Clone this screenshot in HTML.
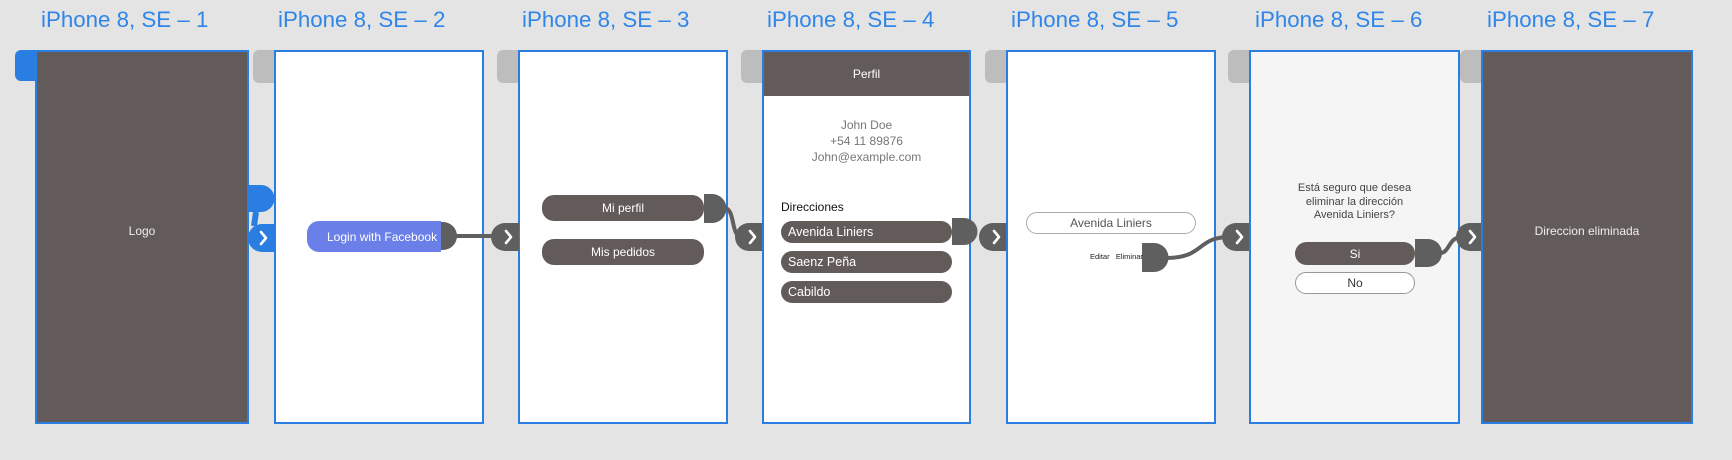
<!DOCTYPE html>
<html><head><meta charset="utf-8"><style>
*{margin:0;padding:0;box-sizing:border-box}
body{width:1732px;height:460px;background:#e4e4e4;position:relative;overflow:hidden;font-family:"Liberation Sans",Arial,sans-serif}
.t{position:absolute;top:7px;font-size:22.3px;color:#2f86e8;white-space:nowrap}
.f{position:absolute;top:50px;height:374px;border:2px solid #2a7de1;background:#fff}
.tab{position:absolute;top:50px;width:21px;height:33px;background:#bdbdbd;border-radius:6px 0 0 6px}
.a{position:absolute;white-space:nowrap}
.btn{position:absolute;background:#635b59;color:#fff;font-size:12px;border-radius:12px;display:flex;align-items:center;justify-content:center}
.lb{justify-content:flex-start;padding-left:7px;font-size:12.5px}
.c{text-align:center}
</style></head><body>
<div class="t" style="left:41px">iPhone 8, SE – 1</div>
<div class="t" style="left:278px">iPhone 8, SE – 2</div>
<div class="t" style="left:522px">iPhone 8, SE – 3</div>
<div class="t" style="left:767px">iPhone 8, SE – 4</div>
<div class="t" style="left:1011px">iPhone 8, SE – 5</div>
<div class="t" style="left:1255px">iPhone 8, SE – 6</div>
<div class="t" style="left:1487px">iPhone 8, SE – 7</div>

<div class="tab" style="left:15px;background:#2a7de1;height:31px"></div>
<div class="tab" style="left:253px"></div>
<div class="tab" style="left:497px"></div>
<div class="tab" style="left:741px"></div>
<div class="tab" style="left:985px"></div>
<div class="tab" style="left:1228px"></div>
<div class="tab" style="left:1460px"></div>

<div class="f" style="left:35px;width:214px;background:#635b59"></div>
<div class="f" style="left:274px;width:210px"></div>
<div class="f" style="left:518px;width:210px"></div>
<div class="f" style="left:762px;width:209px"></div>
<div class="f" style="left:1006px;width:210px"></div>
<div class="f" style="left:1249px;width:211px;background:#f5f5f5"></div>
<div class="f" style="left:1481px;width:212px;background:#635b59"></div>

<svg width="1732" height="460" style="position:absolute;left:0;top:0">
<g fill="none" stroke="#5f5f5f" stroke-width="4">
<path d="M455 236 H495"/>
<path d="M724 208 C736 208 730 237 742 237"/>
<path d="M1166 258 C1205 258 1196 237 1230 237"/>
<path d="M1440 253 C1450 253 1448 237 1462 237"/>
</g>
<path d="M256 212 L254 226" stroke="#2a7de1" stroke-width="6"/>
<path d="M249 185 H261 A13.5 13.5 0 0 1 261 212 H249Z" fill="#2a7de1"/>
<g fill="#5f5f5f">
<path d="M431 222 H443 A14 14 0 0 1 443 250 H431Z"/>
<path d="M704 194 H712 A14.5 14.5 0 0 1 712 223 H704Z"/>
<path d="M952 218 H964 A13.5 13.5 0 0 1 964 245 H952Z"/>
<path d="M1142 243 H1154 A14.5 14.5 0 0 1 1154 272 H1142Z"/>
<path d="M1415 239 H1428 A14 14 0 0 1 1428 267 H1415Z"/>
<path d="M519 223 H505 A14 14 0 0 0 505 251 H519Z"/>
<path d="M762 223 H749 A14 14 0 0 0 749 251 H762Z"/>
<path d="M1006 223 H993 A14 14 0 0 0 993 251 H1006Z"/>
<path d="M1249 223 H1236 A14 14 0 0 0 1236 251 H1249Z"/>
<path d="M1481 223 H1470 A14 14 0 0 0 1470 251 H1481Z"/>
</g>
<path d="M274 224 H262 A14 14 0 0 0 262 252 H274Z" fill="#2a7de1"/>
<g fill="none" stroke="#fff" stroke-width="2.6" stroke-linecap="round" stroke-linejoin="round">
<path d="M261 232 L266 238 L261 244"/>
<path d="M506 231 L511 237 L506 243"/>
<path d="M750 231 L755 237 L750 243"/>
<path d="M994 231 L999 237 L994 243"/>
<path d="M1237 231 L1242 237 L1237 243"/>
<path d="M1470 231 L1475 237 L1470 243"/>
</g>
</svg>

<div class="a" style="left:35px;width:214px;top:224px;text-align:center;color:#eee;font-size:12px">Logo</div>

<div class="btn" style="left:307px;top:221px;width:134px;height:31px;background:#6a7fe8;border-radius:12px 0 0 12px;justify-content:flex-start;padding-left:20px">Login with Facebook</div>

<div class="btn" style="left:542px;top:195px;width:162px;height:26px">Mi perfil</div>
<div class="btn" style="left:542px;top:239px;width:162px;height:26px">Mis pedidos</div>

<div class="a" style="left:764px;top:52px;width:205px;height:44px;background:#635b59;color:#fff;font-size:12px;display:flex;align-items:center;justify-content:center">Perfil</div>
<div class="a c" style="left:764px;width:205px;top:117px;color:#777;font-size:12px;line-height:16px">John Doe<br>+54 11 89876<br>John@example.com</div>
<div class="a" style="left:781px;top:200px;font-size:12px;color:#111">Direcciones</div>
<div class="btn lb" style="left:781px;top:221px;width:171px;height:22px">Avenida Liniers</div>
<div class="btn lb" style="left:781px;top:251px;width:171px;height:22px">Saenz Peña</div>
<div class="btn lb" style="left:781px;top:281px;width:171px;height:22px">Cabildo</div>

<div class="btn" style="left:1026px;top:212px;width:170px;height:22px;background:#fff;color:#555;border:1px solid #aaa">Avenida Liniers</div>
<div class="a" style="left:1090px;top:252px;font-size:7.5px;color:#222">Editar&nbsp;&nbsp;&nbsp;Eliminar</div>

<div class="a c" style="left:1251px;width:207px;top:182px;font-size:11px;color:#444;line-height:13.5px">Está seguro que desea<br>eliminar la dirección<br>Avenida Liniers?</div>
<div class="btn" style="left:1295px;top:242px;width:120px;height:23px">Si</div>
<div class="btn" style="left:1295px;top:272px;width:120px;height:22px;background:#fff;color:#333;border:1px solid #999">No</div>

<div class="a" style="left:1481px;width:212px;top:224px;text-align:center;color:#eee;font-size:12px">Direccion eliminada</div>
</body></html>
